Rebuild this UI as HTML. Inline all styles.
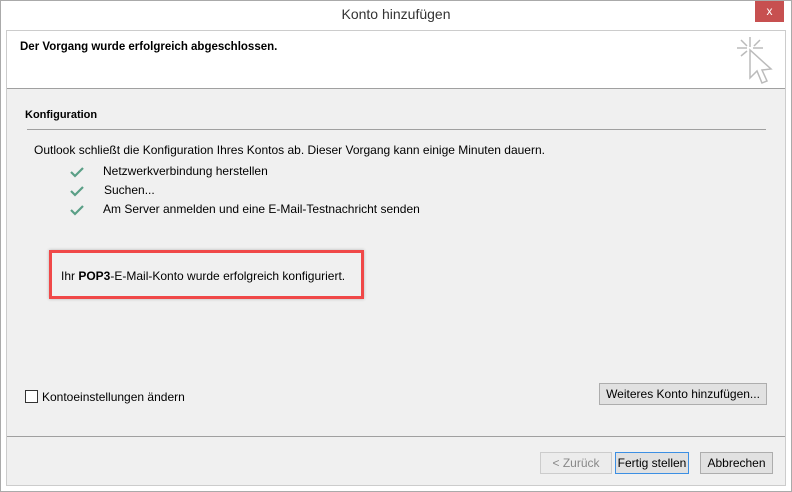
<!DOCTYPE html>
<html><head><style>
*{margin:0;padding:0;box-sizing:border-box}
body{width:792px;height:492px;background:#fff;font-family:"Liberation Sans",sans-serif;font-size:12px;color:#000;position:relative;overflow:hidden}
.a{position:absolute}
.btn{position:absolute;height:22px;border:1px solid #adadad;background:#e1e1e1;text-align:center;line-height:20px;font-size:12px}
</style></head><body>
<div class="a" style="left:0;top:0;width:792px;height:492px;border:1px solid #aaa;background:#fff"></div>
<div class="a" style="left:0;top:6px;width:792px;text-align:center;font-size:14px;color:#333">Konto hinzufügen</div>
<div class="a" style="left:755px;top:1px;width:29px;height:21px;background:#c75050;color:#fff;text-align:center;font-size:12px;line-height:20px">x</div>
<div class="a" style="left:6px;top:30px;width:780px;height:456px;border:1px solid #ccc;background:#f0f0f0"></div>
<div class="a" style="left:7px;top:31px;width:778px;height:58px;background:#fff;border-bottom:1px solid #a0a0a0"></div>
<div class="a" style="left:20px;top:41px;font-weight:bold;font-size:11.5px">Der Vorgang wurde erfolgreich abgeschlossen.</div>
<svg class="a" style="left:736px;top:36px" width="40" height="50" viewBox="0 0 40 50"><g stroke="#bbb" stroke-width="1.5" fill="none"><path d="M14 1v10M1 12h10M17 12h10M5 4l6 6M24 4l-6 6M5 20l6-5"/><path d="M14 14v28l7-7 5 12 5-2-5-11 9-1z" fill="#fff"/></g></svg>
<div class="a" style="left:25px;top:109px;font-weight:bold;font-size:11px">Konfiguration</div>
<div class="a" style="left:27px;top:129px;width:739px;height:1px;background:#a0a0a0"></div>
<div class="a" style="left:34px;top:143px">Outlook schließt die Konfiguration Ihres Kontos ab. Dieser Vorgang kann einige Minuten dauern.</div>
<svg class="a" style="left:70px;top:165px" width="14" height="60"><g stroke="#5a9f86" stroke-width="2.2" fill="none"><path d="M1 7l4 4 8-8"/><path d="M1 26l4 4 8-8"/><path d="M1 45l4 4 8-8"/></g></svg>
<div class="a" style="left:103px;top:164px">Netzwerkverbindung herstellen</div>
<div class="a" style="left:104px;top:183px">Suchen...</div>
<div class="a" style="left:103px;top:202px">Am Server anmelden und eine E-Mail-Testnachricht senden</div>
<div class="a" style="left:49px;top:250px;width:315px;height:49px;border:3px solid #f04848;box-shadow:0 0 3px rgba(0,0,0,.25)"></div>
<div class="a" style="left:61px;top:269px">Ihr <b>POP3</b>-E-Mail-Konto wurde erfolgreich konfiguriert.</div>
<div class="a" style="left:25px;top:390px;width:13px;height:13px;border:1px solid #333;background:#fff"></div>
<div class="a" style="left:42px;top:390px">Kontoeinstellungen ändern</div>
<div class="btn" style="left:599px;top:383px;width:168px">Weiteres Konto hinzufügen...</div>
<div class="a" style="left:7px;top:436px;width:778px;height:1px;background:#a0a0a0"></div>
<div class="btn" style="left:540px;top:452px;width:72px;color:#888;border-color:#ccc;background:#ececec">&lt; Zurück</div>
<div class="btn" style="left:615px;top:452px;width:74px;border-color:#3c8fe3">Fertig stellen</div>
<div class="btn" style="left:700px;top:452px;width:73px">Abbrechen</div>
</body></html>
